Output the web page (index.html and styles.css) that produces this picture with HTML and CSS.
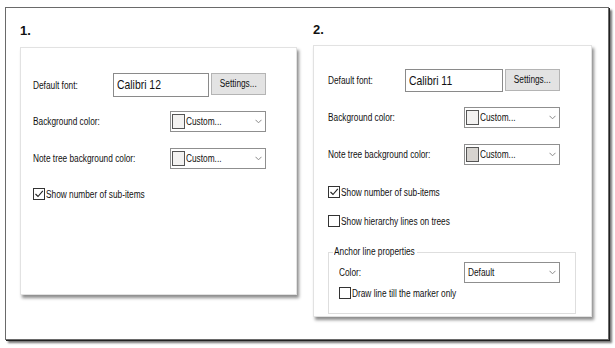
FILE: index.html
```html
<!DOCTYPE html>
<html>
<head>
<meta charset="utf-8">
<link rel="stylesheet" href="styles.css">
</head>
<body>
<div class="frame">
  <div class="col col-1">
    <div class="step">1.</div>
    <div class="panel panel-1">
      <div class="row row-font">
        <span class="label t">Default font:</span>
        <div class="font-group">
          <div class="font-box"><span class="t tf">Calibri 12</span></div>
          <div class="btn"><span class="t tc">Settings...</span></div>
        </div>
      </div>
      <div class="row row-bg">
        <span class="label t">Background color:</span>
        <div class="combo"><span class="swatch"></span><span class="combo-text"><span class="t">Custom...</span></span><svg class="chev" width="7" height="5" viewBox="0 0 7 5"><path d="M0.5 0.8 L3.5 3.8 L6.5 0.8" fill="none" stroke="#8a8a8a" stroke-width="1"/></svg></div>
      </div>
      <div class="row row-tree">
        <span class="label t">Note tree background color:</span>
        <div class="combo"><span class="swatch"></span><span class="combo-text"><span class="t">Custom...</span></span><svg class="chev" width="7" height="5" viewBox="0 0 7 5"><path d="M0.5 0.8 L3.5 3.8 L6.5 0.8" fill="none" stroke="#8a8a8a" stroke-width="1"/></svg></div>
      </div>
      <label class="check check-first"><span class="box"><svg width="10" height="10" viewBox="0 0 10 10"><path d="M1.5 5 L4 7.5 L8.8 1.8" fill="none" stroke="#222" stroke-width="1.1"/></svg></span><span class="check-text t">Show number of sub-items</span></label>
    </div>
  </div>
  <div class="col col-2">
    <div class="step step-2">2.</div>
    <div class="panel panel-2">
      <div class="row row-font">
        <span class="label t">Default font:</span>
        <div class="font-group">
          <div class="font-box font-box-2"><span class="t tf">Calibri 11</span></div>
          <div class="btn"><span class="t tc">Settings...</span></div>
        </div>
      </div>
      <div class="row row-bg">
        <span class="label t">Background color:</span>
        <div class="combo"><span class="swatch"></span><span class="combo-text"><span class="t">Custom...</span></span><svg class="chev" width="7" height="5" viewBox="0 0 7 5"><path d="M0.5 0.8 L3.5 3.8 L6.5 0.8" fill="none" stroke="#8a8a8a" stroke-width="1"/></svg></div>
      </div>
      <div class="row row-tree">
        <span class="label t">Note tree background color:</span>
        <div class="combo"><span class="swatch swatch-dark"></span><span class="combo-text"><span class="t">Custom...</span></span><svg class="chev" width="7" height="5" viewBox="0 0 7 5"><path d="M0.5 0.8 L3.5 3.8 L6.5 0.8" fill="none" stroke="#8a8a8a" stroke-width="1"/></svg></div>
      </div>
      <label class="check check-first"><span class="box"><svg width="10" height="10" viewBox="0 0 10 10"><path d="M1.5 5 L4 7.5 L8.8 1.8" fill="none" stroke="#222" stroke-width="1.1"/></svg></span><span class="check-text t">Show number of sub-items</span></label>
      <label class="check check-second"><span class="box"></span><span class="check-text t">Show hierarchy lines on trees</span></label>
      <fieldset class="group">
        <legend class="legend"><span class="t">Anchor line properties</span></legend>
        <div class="row row-color">
          <span class="label t">Color:</span>
          <div class="combo combo-plain"><span class="combo-text"><span class="t">Default</span></span><svg class="chev" width="7" height="5" viewBox="0 0 7 5"><path d="M0.5 0.8 L3.5 3.8 L6.5 0.8" fill="none" stroke="#8a8a8a" stroke-width="1"/></svg></div>
        </div>
        <label class="check check-draw"><span class="box"></span><span class="check-text t">Draw line till the marker only</span></label>
      </fieldset>
    </div>
  </div>
</div>
</body>
</html>
```
FILE: styles.css
```css
* { box-sizing: border-box; }
html, body { margin: 0; padding: 0; background: #fff; }
body {
  width: 615px;
  height: 348px;
  overflow: hidden;
  font-family: "Liberation Sans", Arial, sans-serif;
  font-size: 10px;
  color: #111;
}
.t {
  display: inline-block;
  white-space: nowrap;
  transform: scaleX(0.83);
  transform-origin: 0 50%;
}
.tc { transform-origin: 50% 50%; }
.tf { transform: scaleX(0.8); }
.frame {
  margin: 7px 0 0 5px;
  width: 604px;
  height: 333px;
  border: 1px solid #6a6a6a;
  box-shadow: 1px 1px 0 #222, 3px 3px 2px rgba(0,0,0,0.55);
  padding: 13px 0 0 14px;
  display: flex;
  gap: 16px;
  align-items: flex-start;
}
.col-1 { width: 277px; }
.col-2 { width: 279px; }
.step {
  font-weight: bold;
  font-size: 13px;
  line-height: 20px;
  height: 20px;
  color: #111;
  margin-bottom: 6px;
}
.step-2 { margin-bottom: 5px; margin-top: -1px; }
.panel {
  background: #fff;
  border: 1px solid #e2e2e2;
  box-shadow: 2px 3px 3px rgba(0,0,0,0.45);
  display: flex;
  flex-direction: column;
}
.panel-1 { height: 248px; padding: 25px 30px 0 12px; }
.panel-2 { height: 272px; padding: 23px 15px 0 14px; }
.row {
  display: flex;
  align-items: center;
  justify-content: space-between;
}
.panel-2 > .row { padding-right: 16px; }
.font-group { display: flex; align-items: flex-start; gap: 2px; }
.font-box {
  width: 96px;
  height: 24px;
  border: 1px solid #8a8a8a;
  background: #fff;
  font-size: 13px;
  line-height: 22px;
  padding-left: 3px;
  color: #111;
}
.font-box-2 { width: 98px; height: 23px; line-height: 21px; }
.btn {
  width: 55px;
  height: 22px;
  border: 1px solid #b4b4b4;
  background: #e3e3e3;
  line-height: 20px;
  text-align: center;
  color: #111;
}
.panel-1 .row-font { height: 24px; }
.panel-1 .row-bg { margin-top: 14px; }
.panel-1 .row-tree { margin-top: 16px; }
.panel-2 .row-font { height: 23px; }
.panel-2 .row-bg { margin-top: 15px; }
.panel-2 .row-tree { margin-top: 16px; }
.combo {
  width: 96px;
  height: 21px;
  border: 1px solid #8f8f8f;
  background: #fff;
  display: flex;
  align-items: center;
  padding: 0 3px 0 0;
}
.swatch {
  width: 13px;
  height: 15px;
  border: 1px solid #555;
  background: #f3f2f1;
  margin-left: 1px;
  flex: none;
}
.swatch-dark { background: #d6d3cf; }
.combo-text { flex: 1; padding-left: 1px; color: #111; }
.combo-plain .combo-text { padding-left: 3px; }
.chev { flex: none; }
.check {
  display: flex;
  align-items: center;
  height: 12px;
}
.box {
  width: 12px;
  height: 12px;
  border: 1px solid #333;
  background: #fff;
  display: flex;
  align-items: center;
  justify-content: center;
  flex: none;
}
.check-text { margin-left: 1px; }
.panel-1 .check-first { margin-top: 19px; }
.panel-2 .check-first { margin-top: 21px; }
.check-second { margin-top: 17px; }
.group {
  margin: 19px 0 0 0;
  border: 1px solid #dedede;
  padding: 4px 15px 14px 10px;
  min-width: 0;
}
.legend {
  margin-left: -6px;
  padding: 0 1px;
  width: 84px;
  line-height: 12px;
}
.check-draw { margin-top: 4px; }
```
